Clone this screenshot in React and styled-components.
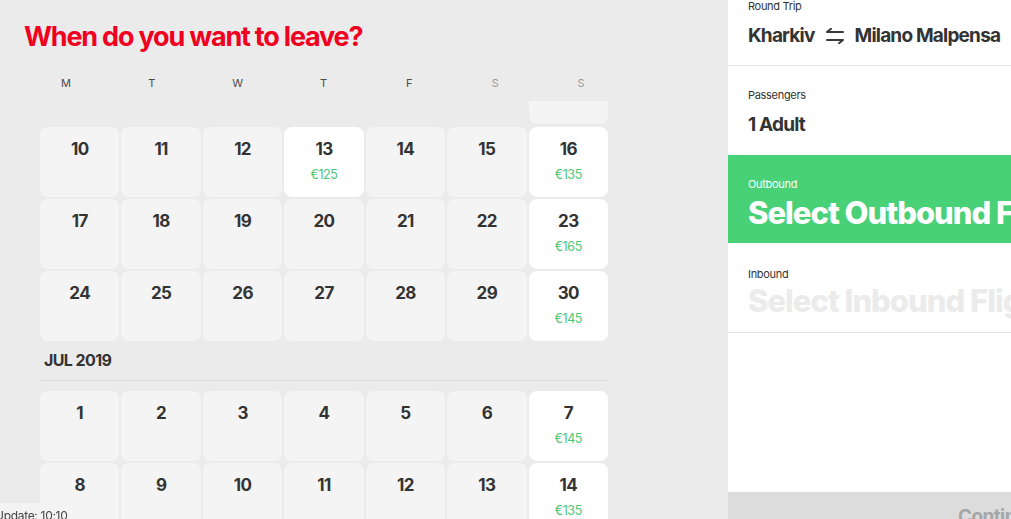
import React from 'react';
import styled, { createGlobalStyle } from 'styled-components';

const GlobalStyle = createGlobalStyle`
    html, body {
        margin: 0;
        padding: 0;
        overflow: hidden;
        background: #ebebeb;
        font-family: Inter, 'Liberation Sans', Arial, sans-serif;
    }
`

const weekdays = [
    { label: 'M' }, { label: 'T' }, { label: 'W' }, { label: 'T' },
    { label: 'F' }, { label: 'S', weekend: true }, { label: 'S', weekend: true },
]

const june = [
    [10, 11, 12, { day: 13, price: '€125' }, 14, 15, { day: 16, price: '€135' }],
    [17, 18, 19, 20, 21, 22, { day: 23, price: '€165' }],
    [24, 25, 26, 27, 28, 29, { day: 30, price: '€145' }],
]

const july = [
    [1, 2, 3, 4, 5, 6, { day: 7, price: '€145' }],
    [8, 9, 10, 11, 12, 13, { day: 14, price: '€135' }],
]

const DayCell = ({ item }) => {
    const data = typeof item === 'number' ? { day: item } : item
    return (
        <Cell available={!!data.price}>
            <DayNum>{data.day}</DayNum>
            {data.price && <Price>{data.price}</Price>}
        </Cell>
    )
}

const Weeks = ({ rows }) => (
    <Grid>
        {rows.flat().map((item, i) => <DayCell key={i} item={item} />)}
    </Grid>
)

const SwapIcon = () => (
    <svg width="20" height="16" viewBox="0 0 20 16" fill="none" stroke="#3a3a3a" strokeWidth="2" strokeLinecap="round" strokeLinejoin="round">
        <path d="M18 4H2M6 0.8L2 4" />
        <path d="M2 12h16M14 15.2l4-3.2" />
    </svg>
)

const App = () => {
    return (
        <Page>
            <GlobalStyle />
            <Calendar>
                <Title>When do you want to leave?</Title>
                <WeekHeader>
                    {weekdays.map((d, i) => <Weekday key={i} weekend={d.weekend}>{d.label}</Weekday>)}
                </WeekHeader>
                <PartialRow>
                    <PartialCell />
                </PartialRow>
                <Weeks rows={june} />
                <MonthTitle>JUL 2019</MonthTitle>
                <Weeks rows={july} />
            </Calendar>
            <Summary>
                <Section>
                    <Label>Round Trip</Label>
                    <Value>
                        Kharkiv
                        <SwapIcon />
                        Milano Malpensa
                    </Value>
                </Section>
                <Section noBorder>
                    <Label>Passengers</Label>
                    <Value>1 Adult</Value>
                </Section>
                <Leg active>
                    <Label light>Outbound</Label>
                    <LegTitle active>Select Outbound Flight</LegTitle>
                </Leg>
                <Leg>
                    <Label>Inbound</Label>
                    <LegTitle>Select Inbound Flight</LegTitle>
                </Leg>
                <Spacer />
                <ContinueBar>Continue</ContinueBar>
            </Summary>
            <UpdateBadge>Update: 10:10</UpdateBadge>
        </Page>
    )
}

const Page = styled.div`
    display: flex;
    height: 100vh;
    width: 100vw;
    overflow: hidden;
`
const Calendar = styled.section`
    flex: 0 0 728px;
    box-sizing: border-box;
    padding: 0 120px 0 40px;
    background: #ebebeb;
`
const Title = styled.h1`
    margin: 21px 0 0 -16px;
    font-size: 27px;
    line-height: 32px;
    font-weight: 700;
    letter-spacing: -1.2px;
    color: #f0001e;
`
const WeekHeader = styled.div`
    display: grid;
    grid-template-columns: repeat(7, 1fr);
    box-sizing: border-box;
    height: 48px;
    padding-top: 12px;
    margin: 0 -16px 0 -17px;
    align-items: center;
`
const Weekday = styled.div`
    text-align: center;
    font-size: 11px;
    color: ${p => p.weekend ? '#9a9a9a' : '#4a4a4a'};
`
const PartialRow = styled.div`
    display: grid;
    grid-template-columns: repeat(7, 1fr);
    gap: 2px;
    height: 23px;
    margin-bottom: 3px;
`
const PartialCell = styled.div`
    grid-column: 7;
    background: #f4f4f4;
    border-radius: 0 0 8px 8px;
`
const Grid = styled.div`
    display: grid;
    grid-template-columns: repeat(7, 1fr);
    grid-auto-rows: 70px;
    gap: 2px;
`
const Cell = styled.div`
    background: ${p => p.available ? '#ffffff' : '#f4f4f4'};
    border-radius: 8px;
    display: flex;
    flex-direction: column;
    align-items: center;
    padding-top: 11px;
    box-sizing: border-box;
`
const DayNum = styled.div`
    font-size: 17px;
    line-height: 22px;
    font-weight: 700;
    letter-spacing: -0.6px;
    color: #333333;
`
const Price = styled.div`
    margin-top: 7px;
    font-size: 12.5px;
    line-height: 16px;
    letter-spacing: -0.4px;
    color: #4cc776;
`
const MonthTitle = styled.div`
    padding: 8px 4px 9px;
    margin-bottom: 10px;
    border-bottom: 1px solid #dcdcdc;
    font-size: 16px;
    line-height: 22px;
    font-weight: 700;
    letter-spacing: -0.6px;
    color: #333333;
`
const Summary = styled.aside`
    flex: 0 0 540px;
    height: 100vh;
    display: flex;
    flex-direction: column;
    background: #ffffff;
`
const Section = styled.div`
    padding: ${p => p.noBorder ? '23px 20px 18px' : '0 20px 17px'};
    border-bottom: ${p => p.noBorder ? 'none' : '1px solid #e6e6e6'};
`
const Label = styled.div`
    font-size: 11px;
    line-height: 13px;
    letter-spacing: -0.3px;
    color: ${p => p.light ? '#ffffff' : '#333333'};
`
const Value = styled.div`
    display: flex;
    align-items: center;
    gap: 10px;
    margin-top: 11px;
    font-size: 19px;
    line-height: 24px;
    font-weight: 700;
    letter-spacing: -0.8px;
    color: #333333;
    white-space: nowrap;
`
const Leg = styled.div`
    padding: ${p => p.active ? '23px 20px 13px' : '25px 20px 14px'};
    background: ${p => p.active ? '#48d176' : '#ffffff'};
    border-bottom: ${p => p.active ? 'none' : '1px solid #e6e6e6'};
`
const LegTitle = styled.div`
    margin-top: ${p => p.active ? '5px' : '3px'};
    font-size: 31px;
    line-height: 34px;
    font-weight: 800;
    letter-spacing: -1px;
    white-space: nowrap;
    color: ${p => p.active ? '#ffffff' : '#ebebeb'};
`
const Spacer = styled.div`
    flex: 1;
`
const ContinueBar = styled.div`
    height: 27px;
    overflow: hidden;
    box-sizing: border-box;
    padding: 14px 0 0 230px;
    background: #dcdcdc;
    font-size: 19px;
    line-height: 22px;
    font-weight: 700;
    letter-spacing: -0.6px;
    color: #a6a6a6;
`
const UpdateBadge = styled.div`
    position: fixed;
    left: 0;
    bottom: 0;
    width: 68px;
    height: 16px;
    overflow: hidden;
    box-sizing: border-box;
    padding: 6px 0 0;
    text-indent: -5px;
    background: #f3f3f3;
    border-top-right-radius: 6px;
    font-size: 12px;
    line-height: 13px;
    letter-spacing: -0.3px;
    color: #444444;
    white-space: nowrap;
`

export default App;
